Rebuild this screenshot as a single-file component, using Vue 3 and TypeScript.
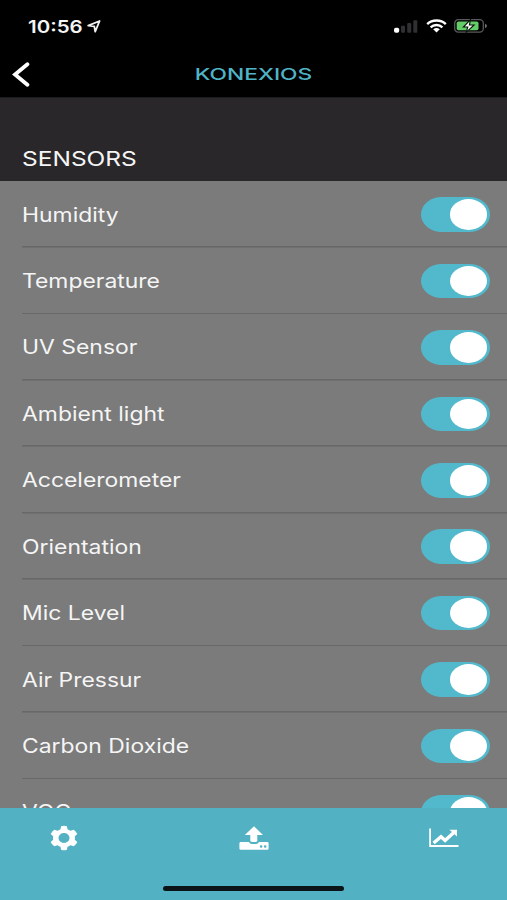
<script setup lang="ts">
import { ref } from 'vue'

interface Sensor {
  name: string
  enabled: boolean
}

const sensors = ref<Sensor[]>(
  [
    'Humidity',
    'Temperature',
    'UV Sensor',
    'Ambient light',
    'Accelerometer',
    'Orientation',
    'Mic Level',
    'Air Pressur',
    'Carbon Dioxide',
    'VOC',
  ].map((name) => ({ name, enabled: true })),
)
</script>

<template>
  <div class="screen">
    <header class="top">
      <div class="status">
        <span class="time">10:56</span>
        <svg class="location" width="14" height="13" viewBox="0 0 14 13">
          <path d="M1.2 5.6 12.6 1 8.2 11.6 7.3 6.3Z" fill="none" stroke="#f2f2f2" stroke-width="1.8" stroke-linejoin="round" />
        </svg>
        <svg class="signal" width="25" height="14" viewBox="0 0 25 14">
          <rect x="0" y="8.8" width="5.2" height="5" rx="1.8" fill="#fff" />
          <rect x="7" y="6.8" width="4" height="7" rx="1" fill="#303032" />
          <rect x="13.2" y="4.1" width="4" height="9.7" rx="1" fill="#303032" />
          <rect x="19.3" y="1.3" width="4" height="12.5" rx="1" fill="#303032" />
        </svg>
        <svg class="wifi" width="21" height="14" viewBox="0 0 21 14">
          <g fill="none" stroke="#fff" stroke-width="2.4">
            <path d="M1.2 5.2C6.2.3 14.8.3 19.8 5.2" />
            <path d="M4.6 8.3C7.9 5.2 13.1 5.2 16.4 8.3" />
          </g>
          <path d="M7.2 10.3Q10.5 7.8 13.8 10.3L10.5 13.4Z" fill="#fff" />
        </svg>
        <svg class="battery" width="34" height="14" viewBox="0 0 34 14">
          <rect x=".7" y=".7" width="28.6" height="12.4" rx="3.6" fill="none" stroke="#59595b" stroke-width="1.3" />
          <path d="M31 4.8Q35 7 31 9.2Z" fill="#707072" />
          <rect x="2.7" y="2.5" width="21.8" height="8.8" rx="1.8" fill="#65cd68" />
          <path d="M16.5.7 9.4 8h4.4l-1.6 5.3L20.1 6h-4.7Z" fill="#fff" stroke="#061407" stroke-width="1.1" />
        </svg>
      </div>
      <nav class="nav">
        <button class="back" aria-label="Back">
          <svg width="18" height="26" viewBox="0 0 18 26">
            <path d="M15.4 2.2 3 12.5 15.4 22.8" fill="none" stroke="#fff" stroke-width="3.8" stroke-linecap="round" stroke-linejoin="miter" />
          </svg>
        </button>
        <h1 class="brand">KONEXIOS</h1>
      </nav>
    </header>

    <main class="content">
      <h2 class="section"><span class="wide">SENSORS</span></h2>
      <ul class="list">
        <li v-for="sensor in sensors" :key="sensor.name" class="row">
          <span class="wide">{{ sensor.name }}</span>
          <button
            class="toggle"
            :class="{ on: sensor.enabled }"
            role="switch"
            :aria-checked="sensor.enabled"
            :aria-label="sensor.name"
            @click="sensor.enabled = !sensor.enabled"
          >
            <i class="knob"></i>
          </button>
        </li>
      </ul>
    </main>

    <footer class="tabs">
      <div class="tab-row">
        <button class="tab" aria-label="Settings">
          <svg width="28" height="26" viewBox="0 0 28 26">
            <path
              fill="#fff"
              fill-rule="evenodd"
              d="M11.1 1.2Q14 .2 16.9 1.2L17.5 4.2Q19 4.7 20.4 5.7L23.8 4.8Q26.2 6.5 27.3 9.1L24.8 11.3Q25.2 13 24.8 14.7L27.3 16.9Q26.2 19.5 23.8 21.2L20.4 20.3Q19 21.3 17.5 21.8L16.9 24.8Q14 25.8 11.1 24.8L10.5 21.8Q9 21.3 7.6 20.3L4.2 21.2Q1.8 19.5.7 16.9L3.2 14.7Q2.8 13 3.2 11.3L.7 9.1Q1.8 6.5 4.2 4.8L7.6 5.7Q9 4.7 10.5 4.2ZM14 8.1A5.5 4.9 0 1 0 14 17.9A5.5 4.9 0 1 0 14 8.1Z"
            />
          </svg>
        </button>
        <button class="tab" aria-label="Upload">
          <svg width="30" height="25" viewBox="0 0 30 25">
            <path fill="#fff" d="M15 .2 24 8.9H18.3V15.2Q15 17 11.3 15.2V8.9H5.8Z" />
            <path
              fill="#fff"
              fill-rule="evenodd"
              d="M1.8 15.9H9.8Q11 17.9 13 17.9H17Q19 17.9 20.1 15.9H28.2Q29.6 15.9 29.6 17.2V22.5Q29.6 23.8 28.2 23.8H1.8Q.4 23.8.4 22.5V17.2Q.4 15.9 1.8 15.9ZM22.1 19.3A1.3 1.2 0 1 0 22.1 21.7A1.3 1.2 0 1 0 22.1 19.3ZM26.2 19.3A1.3 1.2 0 1 0 26.2 21.7A1.3 1.2 0 1 0 26.2 19.3Z"
            />
          </svg>
        </button>
        <button class="tab" aria-label="Charts">
          <svg width="30" height="20" viewBox="0 0 30 20">
            <path d="M1.1.5V18H29.5" fill="none" stroke="#fff" stroke-width="1.8" />
            <path d="M4.6 15 12 8.8 16.1 12.4 24.8 4.6" fill="none" stroke="#fff" stroke-width="3.4" />
            <path d="M20.4 1.8H28V8.6Z" fill="#fff" />
          </svg>
        </button>
      </div>
      <div class="home-indicator"></div>
    </footer>
  </div>
</template>

<style>
body {
  margin: 0;
  background: #000;
}
</style>

<style scoped>
.screen {
  width: 507px;
  height: 900px;
  display: flex;
  flex-direction: column;
  overflow: hidden;
  font-family: Inter, 'Liberation Sans', sans-serif;
  color: #f5f5f5;
}

button {
  padding: 0;
  border: 0;
  background: none;
}

svg {
  display: block;
}

.top {
  flex: none;
  height: 97px;
  background: #000;
  border-bottom: 1px solid #1b1a1c;
}

.status {
  display: flex;
  height: 52px;
  align-items: center;
  padding: 0 19px 0 28px;
  box-sizing: border-box;
}

.time {
  width: 59px;
  font-size: 17.5px;
  font-weight: 600;
  white-space: nowrap;
  transform: scaleX(1.17);
  transform-origin: left;
}

.signal {
  margin-left: auto;
}

.wifi {
  margin: 0 7px 0 7px;
}

.nav {
  display: grid;
  grid-template-columns: 60px 1fr 60px;
  align-items: center;
  height: 45px;
}

.back {
  padding-left: 12px;
}

.brand {
  margin: 0;
  color: #4fb4c6;
  font-size: 15.8px;
  font-weight: 500;
  line-height: 20px;
  text-align: center;
  transform: scaleX(1.44);
}

.content {
  flex: 1;
  min-height: 0;
  overflow: hidden;
  background: #7b7b7b;
}

.wide {
  display: inline-block;
  white-space: nowrap;
  transform: scaleX(1.175);
  transform-origin: left;
}

.section {
  display: flex;
  align-items: flex-end;
  height: 83.4px;
  margin: 0;
  padding: 0 21.5px 9.4px;
  box-sizing: border-box;
  background: #29272a;
  font-size: 20px;
  font-weight: 400;
  line-height: 26px;
}

.section .wide {
  transform: scaleX(1.225);
}

.list {
  margin: 0;
  padding: 0 0 0 21.5px;
  list-style: none;
}

.row {
  display: flex;
  align-items: center;
  justify-content: space-between;
  height: 66.43px;
  padding-right: 17.5px;
  box-sizing: border-box;
  font-size: 19.5px;
  background: linear-gradient(#686868, #686868) bottom / 100% 1.6px no-repeat;
}

.toggle {
  display: flex;
  align-items: center;
  width: 69px;
  height: 34.5px;
  padding: 0 2.5px;
  box-sizing: border-box;
  border-radius: 21px / 17.25px;
  background: #686868;
}

.toggle.on {
  justify-content: flex-end;
  background: #52b9cd;
}

.knob {
  width: 37.5px;
  height: 30.5px;
  border-radius: 50%;
  background: #fff;
}

.tabs {
  flex: none;
  display: flex;
  flex-direction: column;
  align-items: center;
  justify-content: space-between;
  height: 92px;
  padding-bottom: 9px;
  box-sizing: border-box;
  background: #52b1c3;
}

.tab-row {
  display: flex;
  justify-content: space-between;
  align-self: stretch;
  height: 60px;
  padding: 0 48px 0 50px;
}

.home-indicator {
  width: 181px;
  height: 5.5px;
  border-radius: 3px;
  background: #0b1416;
}
</style>
